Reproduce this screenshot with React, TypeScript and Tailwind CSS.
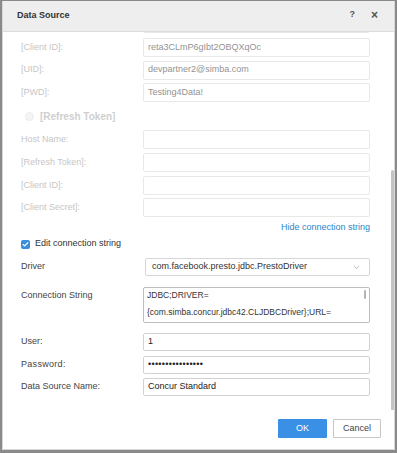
import { Check, ChevronDown } from "lucide-react";

const font = { fontFamily: '"Liberation Sans", Arial, sans-serif' };

function Field({ label, value, disabled, className = "" }: { label: string; value?: string; disabled?: boolean; className?: string }) {
  return (
    <div className={`flex items-center ${className}`}>
      <div className={`w-[122px] shrink-0 text-[9px] ${disabled ? "text-[#c6c6c6]" : "text-[#444]"}`}>{label}</div>
      <div
        className={`w-[227px] h-full flex items-center px-[4px] text-[9px] border rounded-[2px] ${
          disabled ? "border-[#e8e8e8] text-[#939393]" : "border-[#d2d2d2] text-[#222]"
        }`}
      >
        {value}
      </div>
    </div>
  );
}

export default function App() {
  return (
    <div className="w-[397px] h-[453px] bg-[#8a8a8a] pt-[1px] px-[2px] pb-[3px] flex flex-col" style={font}>
      <div className="flex-1 flex flex-col bg-white border-x border-b border-[#d8d8d8] overflow-hidden">
        {/* Header */}
        <div className="h-[31px] shrink-0 bg-[#eeeeee] border-b border-[#dcdcdc] flex items-center pl-[14px] pr-[16px]">
          <span className="text-[9px] font-bold text-[#333]">Data Source</span>
          <span className="ml-auto text-[9px] font-bold text-[#555] mb-[3px]">?</span>
          <span className="ml-[16px] text-[12px] font-bold text-[#555] leading-none mb-[3px]">×</span>
        </div>

        {/* Body (scrolled) */}
        <div className="relative h-[378px] shrink-0 overflow-hidden pl-[18px]">
          <div className="flex flex-col">
            <Field label="" disabled className="h-[19px] mt-[-18px]" />
            <Field label="[Client ID]:" value="reta3CLmP6gIbt2OBQXqOc" disabled className="h-[19px] mt-[5px]" />
            <Field label="[UID]:" value="devpartner2@simba.com" disabled className="h-[19px] mt-[3.5px]" />
            <Field label="[PWD]:" value="Testing4Data!" disabled className="h-[19px] mt-[3.5px]" />

            <div className="h-[18px] mt-[5px] flex items-center pl-[4px]">
              <span className="w-[9px] h-[9px] rounded-full border border-[#ececec] bg-[#f4f4f4]" />
              <span className="ml-[6px] text-[10px] font-bold text-[#cfcfcf]">[Refresh Token]</span>
            </div>

            <Field label="Host Name:" disabled className="h-[19px] mt-[5px]" />
            <Field label="[Refresh Token]:" disabled className="h-[19px] mt-[4px]" />
            <Field label="[Client ID]:" disabled className="h-[19px] mt-[4px]" />
            <Field label="[Client Secret]:" disabled className="h-[19px] mt-[3px]" />

            <div className="h-[14px] mt-[4px] w-[349px] flex items-center justify-end">
              <span className="text-[9px] text-[#2a87c8]">Hide connection string</span>
            </div>

            <div className="h-[14px] mt-[2px] flex items-center">
              <span className="w-[9px] h-[9px] rounded-[2px] bg-[#3b8edc] flex items-center justify-center">
                <Check className="w-[7px] h-[7px] text-white" strokeWidth={4} />
              </span>
              <span className="ml-[5px] text-[9px] text-[#333]">Edit connection string</span>
            </div>

            <div className="h-[18px] mt-[7px] flex items-center">
              <div className="w-[124px] shrink-0 text-[9px] text-[#444]">Driver</div>
              <div className="w-[225px] h-full flex items-center pl-[6px] pr-[8px] border border-[#d6d6d6] rounded-[2px] text-[9px] text-[#333]">
                com.facebook.presto.jdbc.PrestoDriver
                <ChevronDown className="ml-auto w-[9px] h-[9px] text-[#888]" strokeWidth={1.5} />
              </div>
            </div>

            <div className="h-[36px] mt-[11px] flex">
              <div className="w-[122px] shrink-0 text-[9px] text-[#444] pt-[2px]">Connection String</div>
              <div className="relative w-[227px] h-full border border-[#bdbdbd] rounded-[2px] pl-[3px] pr-[10px] text-[8.5px] text-[#333] leading-[18px]">
                <div className="-mt-[2px]">JDBC;DRIVER=</div>
                <div className="-mt-[1px]">{"{com.simba.concur.jdbc42.CLJDBCDriver};URL="}</div>
                <span className="absolute right-[3px] top-[2px] w-[2px] h-[9px] bg-[#b4b4b4] rounded" />
              </div>
            </div>

            <Field label="User:" value="1" className="h-[18px] mt-[10px]" />
            <Field label="Password:" value="••••••••••••••••" className="h-[18px] mt-[5px] tracking-[0.3px]" />
            <Field label="Data Source Name:" value="Concur Standard" className="h-[18px] mt-[4px]" />
          </div>

          {/* scrollbar thumb */}
          <div className="absolute right-[0px] top-[138px] bottom-0 w-[3px] bg-[#c4c4c4] rounded-t-[2px]" />
        </div>

        {/* Footer */}
        <div className="flex-1 flex justify-end items-start pt-[9px] pr-[13px] gap-[6px]">
          <button className="w-[49px] h-[19px] bg-[#3a90e5] text-white text-[9px] rounded-[1px]">OK</button>
          <button className="w-[48px] h-[19px] bg-white border border-[#c6c6c6] text-[#444] text-[9px] rounded-[1px]">Cancel</button>
        </div>
      </div>
    </div>
  );
}
